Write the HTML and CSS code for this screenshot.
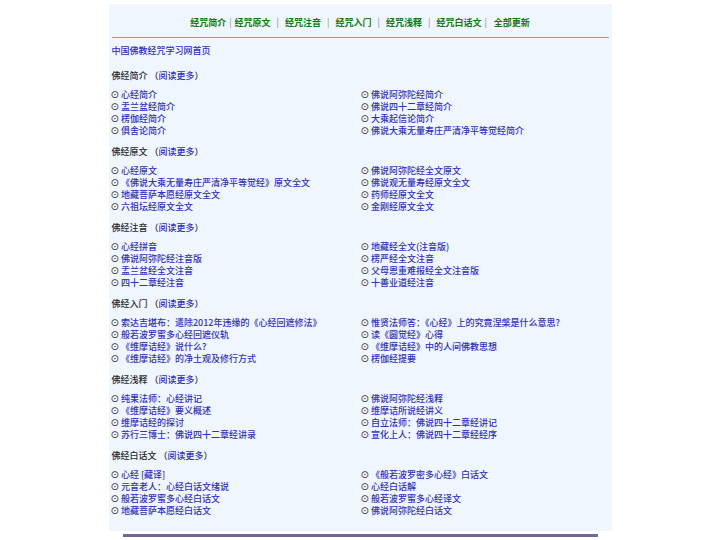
FILE: index.html
```html
<!DOCTYPE html>
<html lang="zh-CN">
<head>
<meta charset="utf-8">
<title>中国佛教经咒学习网</title>
<link rel="stylesheet" href="styles.css">
</head>
<body>
<div class="page">
  <div class="nav">
    <a href="#">经咒简介</a><span class="sep first">|</span><a href="#">经咒原文</a><span class="sep">|</span><a href="#">经咒注音</a><span class="sep">|</span><a href="#">经咒入门</a><span class="sep">|</span><a href="#">经咒浅释</a><span class="sep">|</span><a href="#">经咒白话文</a><span class="sep last">|</span><a href="#">全部更新</a>
  </div>
  <div class="content">
    <div class="home"><a href="#">中国佛教经咒学习网首页</a></div>

    <div class="sec">
      <div class="head">佛经简介 （<a href="#">阅读更多</a>）</div>
      <ul class="list">
        <li><a href="#">心经简介</a></li>
        <li><a href="#">佛说阿弥陀经简介</a></li>
        <li><a href="#">盂兰盆经简介</a></li>
        <li><a href="#">佛说四十二章经简介</a></li>
        <li><a href="#">楞伽经简介</a></li>
        <li><a href="#">大乘起信论简介</a></li>
        <li><a href="#">俱舍论简介</a></li>
        <li><a href="#">佛说大乘无量寿庄严清净平等觉经简介</a></li>
      </ul>
    </div>

    <div class="sec">
      <div class="head">佛经原文 （<a href="#">阅读更多</a>）</div>
      <ul class="list">
        <li><a href="#">心经原文</a></li>
        <li><a href="#">佛说阿弥陀经全文原文</a></li>
        <li><a href="#">《佛说大乘无量寿庄严清净平等觉经》原文全文</a></li>
        <li><a href="#">佛说观无量寿经原文全文</a></li>
        <li><a href="#">地藏菩萨本愿经原文全文</a></li>
        <li><a href="#">药师经原文全文</a></li>
        <li><a href="#">六祖坛经原文全文</a></li>
        <li><a href="#">金刚经原文全文</a></li>
      </ul>
    </div>

    <div class="sec">
      <div class="head">佛经注音 （<a href="#">阅读更多</a>）</div>
      <ul class="list">
        <li><a href="#">心经拼音</a></li>
        <li><a href="#">地藏经全文(注音版)</a></li>
        <li><a href="#">佛说阿弥陀经注音版</a></li>
        <li><a href="#">楞严经全文注音</a></li>
        <li><a href="#">盂兰盆经全文注音</a></li>
        <li><a href="#">父母恩重难报经全文注音版</a></li>
        <li><a href="#">四十二章经注音</a></li>
        <li><a href="#">十善业道经注音</a></li>
      </ul>
    </div>

    <div class="sec">
      <div class="head">佛经入门 （<a href="#">阅读更多</a>）</div>
      <ul class="list">
        <li><a href="#">索达吉堪布：遣除2012年违缘的《心经回遮修法》</a></li>
        <li><a href="#">惟贤法师答：《心经》上的究竟涅槃是什么意思?</a></li>
        <li><a href="#">般若波罗蜜多心经回遮仪轨</a></li>
        <li><a href="#">读《圆觉经》心得</a></li>
        <li><a href="#">《维摩诘经》说什么?</a></li>
        <li><a href="#">《维摩诘经》中的人间佛教思想</a></li>
        <li><a href="#">《维摩诘经》的净土观及修行方式</a></li>
        <li><a href="#">楞伽经提要</a></li>
      </ul>
    </div>

    <div class="sec">
      <div class="head">佛经浅释 （<a href="#">阅读更多</a>）</div>
      <ul class="list">
        <li><a href="#">纯果法师：心经讲记</a></li>
        <li><a href="#">佛说阿弥陀经浅释</a></li>
        <li><a href="#">《维摩诘经》要义概述</a></li>
        <li><a href="#">维摩诘所说经讲义</a></li>
        <li><a href="#">维摩诘经的探讨</a></li>
        <li><a href="#">自立法师：佛说四十二章经讲记</a></li>
        <li><a href="#">苏行三博士：佛说四十二章经讲录</a></li>
        <li><a href="#">宣化上人：佛说四十二章经经序</a></li>
      </ul>
    </div>

    <div class="sec">
      <div class="head">佛经白话文 （<a href="#">阅读更多</a>）</div>
      <ul class="list">
        <li><a href="#">心经 [藏译]</a></li>
        <li><a href="#">《般若波罗密多心经》白话文</a></li>
        <li><a href="#">元音老人：心经白话文绪说</a></li>
        <li><a href="#">心经白话解</a></li>
        <li><a href="#">般若波罗蜜多心经白话文</a></li>
        <li><a href="#">般若波罗蜜多心经译文</a></li>
        <li><a href="#">地藏菩萨本愿经白话文</a></li>
        <li><a href="#">佛说阿弥陀经白话文</a></li>
      </ul>
    </div>
  </div>
</div>
<div class="footer-bar"></div>
</body>
</html>
```

FILE: styles.css
```css
html, body {
  margin: 0;
  padding: 0;
  background: #ffffff;
}
body {
  font-family: "Noto Sans CJK SC", "Noto Sans", sans-serif;
  font-size: 9px;
  line-height: 12px;
  color: #2a2a2a;
  font-weight: 500;
}
a {
  color: #2f2fc4;
  text-decoration: none;
}
.page {
  width: 503px;
  margin: 4px auto 0;
  background: #eff6fe;
  padding-bottom: 5px;
}
.nav {
  margin: 0 3px;
  padding: 13px 0 8px;
  height: 12px;
  border-bottom: 1px solid #6fba7e;
  display: flex;
  justify-content: center;
  align-items: center;
  font-weight: bold;
}
.nav a {
  color: #117a11;
}
.nav .sep {
  color: #888888;
  font-weight: normal;
  margin: 0 6px;
}
.nav .sep.first {
  margin: 0 3px;
}
.nav .sep.last {
  margin: 0 7px 0 3px;
}
.content {
  padding: 7px 2px 0;
}
.home {
  margin-bottom: 13px;
  height: 12px;
  padding-left: 1px;
}
.sec {
  margin-bottom: 9px;
}
.head {
  margin-bottom: 7px;
  height: 12px;
  padding-left: 1px;
}
.list {
  list-style: none;
  margin: 0;
  padding: 0;
  display: grid;
  grid-template-columns: 250px 250px;
  grid-auto-rows: 12px;
}
.list li {
  white-space: nowrap;
  height: 12px;
  display: flex;
  align-items: center;
}
.list li::before {
  content: "⊙";
  font-family: "DejaVu Sans", sans-serif;
  font-size: 10px;
  line-height: 12px;
  color: #333333;
  margin-right: 2px;
}
.footer-bar {
  width: 475px;
  height: 3px;
  margin: 3px auto 0;
  background: #6e6a9c;
}
```
